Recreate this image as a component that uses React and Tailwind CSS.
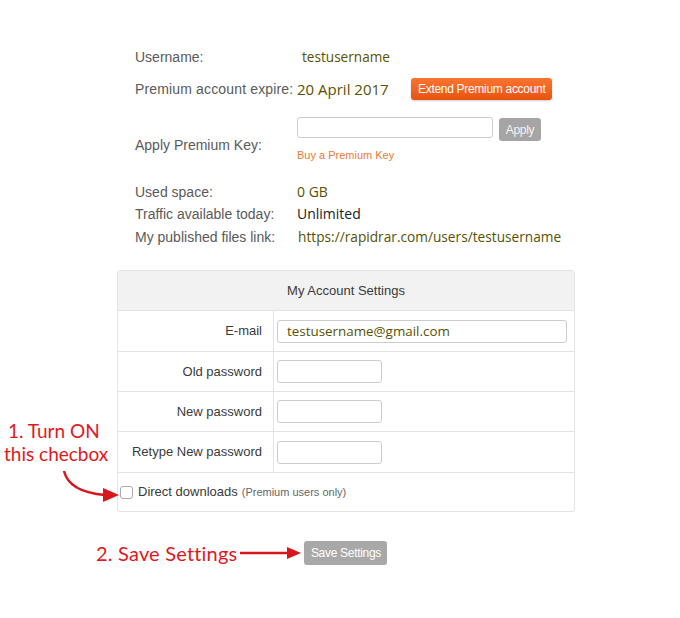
export default function App() {
  const label = "text-[14px] text-[#5a5a5a] font-['Liberation_Sans',Arial,sans-serif]"
  const value = "text-[#575200] font-['Open_Sans',sans-serif]"
  const rows = [
    { name: "Old password", h: "h-[40px]" },
    { name: "New password", h: "h-[40px]" },
    { name: "Retype New password", h: "h-[41px]" },
  ]

  return (
    <div className="relative w-[680px] h-[618px] bg-white font-['Liberation_Sans',Arial,sans-serif]">
      <div className="pl-[135px] pt-[45px]">
        <div className="flex items-center h-[24px]">
          <div className={`w-[167px] ${label}`}>Username:</div>
          <div className={`${value} text-[13.6px]`}>testusername</div>
        </div>

        <div className="flex items-center h-[24px] mt-[8px]">
          <div className={`w-[162px] ${label} tracking-[0.15px]`}>Premium account expire:</div>
          <div className={`w-[114px] text-[15px] ${value}`}>20 April 2017</div>
          <button className="h-[22px] px-[7px] rounded-[3px] bg-gradient-to-b from-[#fa7430] to-[#e9520c] text-white text-[12px] tracking-[-0.3px] shadow-[0_1px_2px_rgba(0,0,0,0.2)]">
            Extend Premium account
          </button>
        </div>

        <div className="flex mt-[16px]">
          <div className={`w-[162px] pt-[18px] leading-[20px] ${label}`}>Apply Premium Key:</div>
          <div>
            <div className="flex items-start">
              <div className="w-[196px] h-[21px] border border-[#ccc] rounded-[3px] bg-white" />
              <button className="ml-[6px] mt-[1px] h-[23px] w-[42px] rounded-[3px] bg-[#a5a5a5] text-[#f4f4f4] text-[12px] tracking-[-0.3px]">
                Apply
              </button>
            </div>
            <div className="mt-[6px] text-[11px] leading-[16px] text-[#e77d32]">Buy a Premium Key</div>
          </div>
        </div>

        <div className="mt-[18px] leading-[22px]">
          <div className="flex h-[22px] items-center">
            <div className={`w-[162px] ${label}`}>Used space:</div>
            <div className={`${value} text-[14px]`}>0 GB</div>
          </div>
          <div className="flex h-[22px] items-center">
            <div className={`w-[162px] ${label}`}>Traffic available today:</div>
            <div className="text-[14px] text-[#222] font-['Open_Sans',sans-serif]">Unlimited</div>
          </div>
          <div className="flex h-[23px] items-center">
            <div className={`w-[163px] ${label}`}>My published files link:</div>
            <div className={`${value} text-[13.7px]`}>https://rapidrar.com/users/testusername</div>
          </div>
        </div>
      </div>

      <div className="ml-[117px] mt-[22px] w-[458px] border border-[#e3e3e3] rounded-[3px]">
        <div className="h-[40px] flex items-center justify-center bg-[#f2f2f2] border-b border-[#e3e3e3] text-[13px] text-[#3a3a3a]">
          My Account Settings
        </div>
        <div className="flex h-[41px] border-b border-[#e3e3e3]">
          <div className="w-[156px] flex items-center justify-end pr-[11px] border-r border-[#e3e3e3] text-[13px] text-[#3a3a3a]">
            E-mail
          </div>
          <div className="flex-1 flex items-center pl-[3px] pr-[7px]">
            <div className={`w-full h-[23px] border border-[#ccc] rounded-[3px] flex items-center pl-[9px] text-[13.4px] ${value}`}>
              testusername@gmail.com
            </div>
          </div>
        </div>
        {rows.map((r) => (
          <div key={r.name} className={`flex ${r.h} border-b border-[#e3e3e3]`}>
            <div className="w-[156px] flex items-center justify-end pr-[11px] border-r border-[#e3e3e3] text-[13px] text-[#3a3a3a]">
              {r.name}
            </div>
            <div className="flex-1 flex items-center pl-[3px]">
              <div className="w-[105px] h-[23px] border border-[#ccc] rounded-[3px]" />
            </div>
          </div>
        ))}
        <div className="flex items-center h-[38px] pl-[2px]">
          <div className="w-[13px] h-[13px] border border-[#aaa] rounded-[3px] bg-white" />
          <span className="ml-[5px] text-[13px] text-[#3a3a3a]">Direct downloads</span>
          <span className="ml-[4px] text-[11px] text-[#666]">(Premium users only)</span>
        </div>
      </div>

      <div className="flex items-center mt-[29px] pl-[96px]">
        <span className="text-[20px] leading-[24px] text-[#e3171b] font-['Lato',sans-serif] tracking-[0.2px]">
          2. Save Settings
        </span>
        <svg width="63" height="16" viewBox="0 0 63 16" className="ml-[2px]">
          <line x1="1" y1="8" x2="50" y2="8" stroke="#d8161b" strokeWidth="2.5" />
          <polygon points="48,2 62,8 48,14" fill="#d8161b" />
        </svg>
        <button className="ml-[2px] h-[24px] w-[83px] rounded-[3px] bg-[#a8a8a8] text-white text-[12px] tracking-[-0.3px]">
          Save Settings
        </button>
      </div>

      <div className="absolute left-[6px] top-[419px] text-[19px] leading-[23px] text-[#e3171b] font-['Lato',sans-serif]">
        <div className="pl-[2px]">1. Turn ON</div>
        <div className="-ml-[2px]">this checbox</div>
      </div>
      <svg className="absolute left-[55px] top-[468px]" width="70" height="36" viewBox="0 0 70 36">
        <path d="M9 3 Q14 24 50 27" fill="none" stroke="#d8161b" strokeWidth="2.5" />
        <polygon points="48,20 64,27 48,34" fill="#d8161b" />
      </svg>
    </div>
  )
}
